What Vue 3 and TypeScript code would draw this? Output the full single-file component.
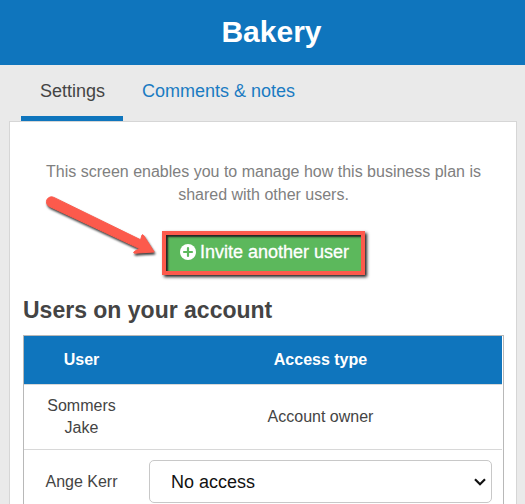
<script setup lang="ts">
import { ref } from 'vue'

type Access = 'none' | 'read' | 'edit'

interface Member {
  id: number
  name: string
  owner: boolean
}

const members: Member[] = [
  { id: 1, name: 'Sommers Jake', owner: true },
  { id: 2, name: 'Ange Kerr', owner: false },
]

const access = ref<Record<number, Access>>({ 2: 'none' })
</script>

<template>
  <div class="page">
    <header class="banner">
      <h1>Bakery</h1>
    </header>

    <nav class="tabs">
      <a href="#settings" class="tab active" aria-current="page">Settings</a>
      <a href="#comments" class="tab">Comments &amp; notes</a>
    </nav>

    <main class="card">
      <p class="intro">
        This screen enables you to manage how this business plan is shared with other users.
      </p>

      <div class="action">
        <div class="callout">
          <button type="button" class="invite">
            <svg class="plus" viewBox="0 0 16 16" aria-hidden="true">
              <circle cx="8" cy="8" r="8" fill="#fff" />
              <path d="M8 4v8M4 8h8" stroke="#5cb85c" stroke-width="2.2" stroke-linecap="round" />
            </svg>
            <span>Invite another user</span>
          </button>
          <svg class="arrow" viewBox="0 0 120 70" aria-hidden="true">
            <path
              d="M13.8 7.4 100.6 49.8 102 45 Q103 44 104 46 L114.2 62 94.5 63.2 Q93 63 94.2 61.6 L99.5 58.6 9.2 16.4 A5 5 0 0 1 13.8 7.4Z"
              fill="#fc5a4c"
              stroke="#fc5a4c"
              stroke-width="1"
              stroke-linejoin="round"
            />
          </svg>
        </div>
      </div>

      <h2>Users on your account</h2>

      <table class="users">
        <thead>
          <tr>
            <th scope="col" class="name">User</th>
            <th scope="col">Access type</th>
          </tr>
        </thead>
        <tbody>
          <tr v-for="member in members" :key="member.id">
            <td class="name">{{ member.name }}</td>
            <td v-if="member.owner">Account owner</td>
            <td v-else>
              <div class="picker">
                <select v-model="access[member.id]" :aria-label="`Access type for ${member.name}`">
                  <option value="none">No access</option>
                  <option value="read">Read only</option>
                  <option value="edit">Full access</option>
                </select>
                <svg class="chevron" viewBox="0 0 12 8" aria-hidden="true">
                  <path d="M1 1.2 6 6.2 11 1.2" fill="none" stroke="#111" stroke-width="2.2" />
                </svg>
              </div>
            </td>
          </tr>
        </tbody>
      </table>
    </main>
  </div>
</template>

<style>
body {
  margin: 0;
  background: #eaeaea;
}
</style>

<style scoped>
.page {
  box-sizing: border-box;
  height: 100vh;
  overflow: hidden;
  background: #eaeaea;
  color: #444;
  font-family: "Liberation Sans", Arial, sans-serif;
}

.banner {
  padding: 14px 0 15px 18px;
  background: #0f75bd;
  color: #fff;
  text-align: center;
}

h1 {
  margin: 0;
  font-size: 30px;
  line-height: 36px;
}

.tabs {
  display: flex;
  padding: 0 21px;
}

.tab {
  padding: 15px 18px 13px 19px;
  border-bottom: 5px solid transparent;
  color: #1a7bc2;
  font-size: 18px;
  line-height: 23px;
  text-decoration: none;
}

.tab.active {
  border-bottom-color: #0f75bd;
  color: #444;
}

.card {
  margin: 0 8px 0 9px;
  padding: 38px 12px 24px 13px;
  border: 1px solid #d6d6d6;
  background: #fff;
}

.intro {
  margin: 0;
  padding: 0 16px;
  color: #808080;
  font-size: 16px;
  line-height: 23px;
  text-align: center;
}

.action {
  display: flex;
  justify-content: center;
  margin-top: 25px;
}

.callout {
  position: relative;
  border: 4px solid #fc5a4c;
  box-shadow: 2px 2px 3px #222;
}

.invite {
  display: flex;
  align-items: center;
  gap: 4px;
  height: 36px;
  padding: 0 12px 2px 14px;
  border: 0;
  background: #5cb85c;
  box-shadow: inset 2px 2px 2px #222;
  color: #fff;
  font-family: inherit;
  font-size: 18px;
  -webkit-text-stroke: 0.3px #fff;
}

.plus {
  width: 16px;
  height: 16px;
}

.arrow {
  position: absolute;
  top: -45px;
  right: 201px;
  width: 120px;
  height: 70px;
  filter: drop-shadow(1px 2px 1px rgb(0 0 0 / 75%));
}

h2 {
  margin: 20px 0 10px;
  font-size: 23px;
  line-height: 30px;
}

.users {
  width: 100%;
  padding-right: 1px;
  border: 1px solid #b8b8b8;
  border-spacing: 0;
  font-size: 16px;
  line-height: 22px;
  text-align: center;
}

th {
  padding: 13px 10px;
  background: #0f75bd;
  color: #fff;
}

td {
  padding: 10px;
  border-top: 1px solid #d8d8d8;
}

.name {
  width: 95px;
}

.picker {
  display: grid;
  align-items: center;
}

.picker > * {
  grid-area: 1 / 1;
}

select {
  width: 100%;
  height: 43px;
  padding: 0 36px 0 21px;
  border: 1px solid #c8c8c8;
  border-radius: 5px;
  appearance: none;
  background: #fff;
  color: #111;
  font-family: inherit;
  font-size: 18px;
}

.chevron {
  justify-self: end;
  width: 12px;
  height: 8px;
  margin-right: 6px;
  pointer-events: none;
}
</style>
